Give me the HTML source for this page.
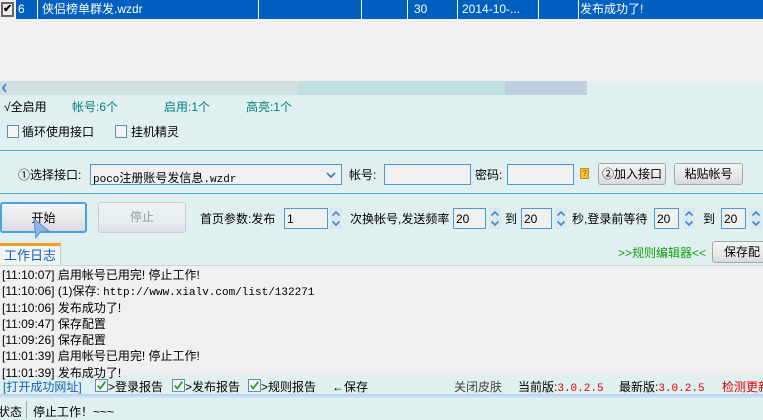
<!DOCTYPE html><html><head><meta charset="utf-8"><style>
*{margin:0;padding:0;box-sizing:border-box}
body{width:763px;height:420px;overflow:hidden;background:#e0f0f0;font-family:"Liberation Sans","WenQuanYi Zen Hei","Noto Sans CJK SC",sans-serif;font-size:12px;color:#000;position:relative}
.a{position:absolute;white-space:nowrap}
.btn{position:absolute;border:1px solid #a0a8a8;border-radius:3px;background:linear-gradient(#f4f4f4,#e8e8e8 60%,#d8d8e4);text-align:center}
.inp{position:absolute;background:#f0f0f0;border:1px solid #4a9ad8;height:21px;padding:3px 2px;font-size:12px}
.spin{position:absolute;width:12px;height:21px}
.cb{position:absolute;width:12px;height:13px;border:1px solid #6a8ab0;background:#f4f4f4}
.ck{position:absolute;width:13px;height:13px;border:1px solid #6a8ab0;background:#f4f4f4}
.log div{height:16.3px;line-height:16px;overflow:hidden}
</style></head><body>
<svg width="0" height="0" style="position:absolute"><defs>
<symbol id="sp" viewBox="0 0 12 21"><rect x="0" y="0" width="12" height="21" fill="#dbe9ee"/><path d="M2.5 7.5 L6 4 L9.5 7.5" fill="none" stroke="#3a8ad0" stroke-width="1.6"/><path d="M2.5 13.5 L6 17 L9.5 13.5" fill="none" stroke="#3a8ad0" stroke-width="1.6"/></symbol>
<symbol id="ck" viewBox="0 0 13 13"><path d="M2 6.5 L5 10 L11 2" fill="none" stroke="#20a020" stroke-width="2"/></symbol>
</defs></svg>
<div class="a" style="left:0;top:0;width:763px;height:81px;background:#f0f0f0"></div>
<div class="a" style="left:16px;top:0;width:747px;height:19px;background:#0060c0;color:#fff;font-size:12px;line-height:19px">
<span class="a" style="left:2px">6</span><span class="a" style="left:26px">侠侣榜单群发.wzdr</span><span class="a" style="left:398px">30</span><span class="a" style="left:446px">2014-10-...</span><span class="a" style="left:564px">发布成功了!</span>
<div class="a" style="left:21px;top:0;width:1px;height:19px;background:#fff"></div>
<div class="a" style="left:242px;top:0;width:1px;height:19px;background:#fff"></div>
<div class="a" style="left:345px;top:0;width:1px;height:19px;background:#fff"></div>
<div class="a" style="left:391px;top:0;width:1px;height:19px;background:#fff"></div>
<div class="a" style="left:441px;top:0;width:1px;height:19px;background:#fff"></div>
<div class="a" style="left:522px;top:0;width:1px;height:19px;background:#fff"></div>
<div class="a" style="left:562px;top:0;width:1px;height:19px;background:#fff"></div>
</div>
<div class="a" style="left:1px;top:2px;width:13px;height:15px;background:#eee;border:2px solid #666;font-size:11px;line-height:11px;text-align:center;font-weight:bold">✔</div>
<div class="a" style="left:0;top:81px;width:299px;height:14px;background:#d0e0e0"></div>
<div class="a" style="left:299px;top:81px;width:206px;height:14px;background:#c0e0e0"></div>
<div class="a" style="left:505px;top:81px;width:82px;height:14px;background:#c0d0e0"></div>
<svg class="a" style="left:1px;top:83px" width="8" height="10"><path d="M5 1 L2 5 L5 9" fill="none" stroke="#3070d0" stroke-width="1.5"/></svg>
<div class="a" style="left:4px;top:98px">√全启用</div>
<div class="a" style="left:72px;top:98px;color:#008080">帐号:6个</div>
<div class="a" style="left:164px;top:98px;color:#008080">启用:1个</div>
<div class="a" style="left:246px;top:98px;color:#008080">高亮:1个</div>
<div class="cb" style="left:7px;top:125px"></div><div class="a" style="left:22px;top:123px">循环使用接口</div>
<div class="cb" style="left:115px;top:125px"></div><div class="a" style="left:131px;top:123px">挂机精灵</div>
<div class="a" style="left:0;top:150px;width:763px;height:1px;background:#40b0e0"></div>
<div class="a" style="left:18px;top:166px">①选择接口:</div>
<div class="inp" style="left:90px;top:164px;width:252px;height:21px;font-family:'Liberation Mono',monospace;font-size:11px;padding-top:4px">poco<span style="font-family:'WenQuanYi Zen Hei',sans-serif;font-size:12px">注册账号发信息</span>.wzdr<svg class="a" style="right:5px;top:6px" width="10" height="8"><path d="M1 2 L5 6 L9 2" fill="none" stroke="#3a7ac0" stroke-width="1.6"/></svg></div>
<div class="a" style="left:349px;top:166px">帐号:</div>
<div class="inp" style="left:384px;top:164px;width:87px"></div>
<div class="a" style="left:475px;top:166px">密码:</div>
<div class="inp" style="left:507px;top:164px;width:67px"></div>
<div class="a" style="left:580px;top:168px;width:9px;height:11px;background:#f0c040;border:1px solid #c09020;font-size:8px;line-height:9px;text-align:center;color:#a06000">?</div>
<div class="btn" style="left:598px;top:163px;width:68px;height:22px;line-height:20px">②加入接口</div>
<div class="btn" style="left:674px;top:163px;width:69px;height:22px;line-height:20px">粘贴帐号</div>
<div class="a" style="left:0;top:193px;width:763px;height:1px;background:#40b0e0"></div>
<div class="btn" style="left:0;top:202px;width:87px;height:31px;line-height:29px;border:2px solid #4aa0e0">开始</div>
<svg class="a" style="left:32px;top:218px" width="20" height="22"><path d="M2 1 L4 20 L8 14 L17 13 Z" fill="#8ab8ec" stroke="#5a90d0"/></svg>
<div class="btn" style="left:98px;top:202px;width:88px;height:31px;line-height:29px;color:#999;border-color:#ccc;background:linear-gradient(#f0f0f0,#e4eeee 70%,#dcdcec)">停止</div>
<div class="a" style="left:200px;top:210px">首页参数:发布</div>
<div class="inp" style="left:284px;top:208px;width:44px">1</div><svg class="spin" style="left:330px;top:208px"><use href="#sp"/></svg>
<div class="a" style="left:350px;top:210px">次换帐号,发送频率</div>
<div class="inp" style="left:453px;top:208px;width:33px">20</div><svg class="spin" style="left:489px;top:208px"><use href="#sp"/></svg>
<div class="a" style="left:505px;top:210px">到</div>
<div class="inp" style="left:521px;top:208px;width:31px">20</div><svg class="spin" style="left:555px;top:208px"><use href="#sp"/></svg>
<div class="a" style="left:572px;top:210px">秒,登录前等待</div>
<div class="inp" style="left:654px;top:208px;width:25px">20</div><svg class="spin" style="left:683px;top:208px"><use href="#sp"/></svg>
<div class="a" style="left:703px;top:210px">到</div>
<div class="inp" style="left:721px;top:208px;width:25px">20</div><svg class="spin" style="left:750px;top:208px"><use href="#sp"/></svg>
<div class="a" style="left:0;top:243px;width:61px;height:23px;background:#f0f4f4;border-top:3px solid #f0a020;border-right:1px solid #c0d0d0;color:#1060c0;font-size:13px;line-height:20px;padding-left:4px">工作日志</div>
<div class="a" style="left:618px;top:244px;color:#10a010">&gt;&gt;规则编辑器&lt;&lt;</div>
<div class="btn" style="left:712px;top:241px;width:60px;height:22px;line-height:20px;text-align:left;padding-left:11px">保存配置</div>
<div class="a log" style="left:0;top:265px;width:763px;height:110px;background:#f0f0f0;border-top:1px solid #c8d8d8;padding:1px 0 0 2px;font-size:12px">
<div>[11:10:07] 启用帐号已用完! 停止工作!</div><div>[11:10:06] (1)保存: <span style="font-family:'Liberation Mono',monospace;font-size:11px">http://www.xialv.com/list/132271</span></div><div>[11:10:06] 发布成功了!</div><div>[11:09:47] 保存配置</div><div>[11:09:26] 保存配置</div><div>[11:01:39] 启用帐号已用完! 停止工作!</div><div>[11:01:39] 发布成功了!</div></div>
<div class="a" style="left:3px;top:378px;color:#1060c0">[打开成功网址]</div>
<svg class="ck" style="left:95px;top:379px"><use href="#ck"/></svg><div class="a" style="left:108px;top:378px">&gt;登录报告</div>
<svg class="ck" style="left:172px;top:379px"><use href="#ck"/></svg><div class="a" style="left:185px;top:378px">&gt;发布报告</div>
<svg class="ck" style="left:248px;top:379px"><use href="#ck"/></svg><div class="a" style="left:261px;top:378px">&gt;规则报告</div>
<div class="a" style="left:332px;top:378px">←保存</div>
<div class="a" style="left:454px;top:378px;color:#444">关闭皮肤</div>
<div class="a" style="left:518px;top:378px">当前版:<span style="color:#e00000;font-family:'Liberation Mono',monospace;font-size:11px">3.0.2.5</span></div>
<div class="a" style="left:619px;top:378px">最新版:<span style="color:#e00000;font-family:'Liberation Mono',monospace;font-size:11px">3.0.2.5</span></div>
<div class="a" style="left:722px;top:378px;color:#e00000">检测更新</div>
<div class="a" style="left:0;top:394px;width:763px;height:5px;background:linear-gradient(#b0d0f0,#e0f0f8)"></div>
<div class="a" style="left:-2px;top:403px">状态</div>
<div class="a" style="left:26px;top:401px;width:1px;height:18px;background:#9ab"></div>
<div class="a" style="left:33px;top:403px">停止工作！~~~</div>
</body></html>
